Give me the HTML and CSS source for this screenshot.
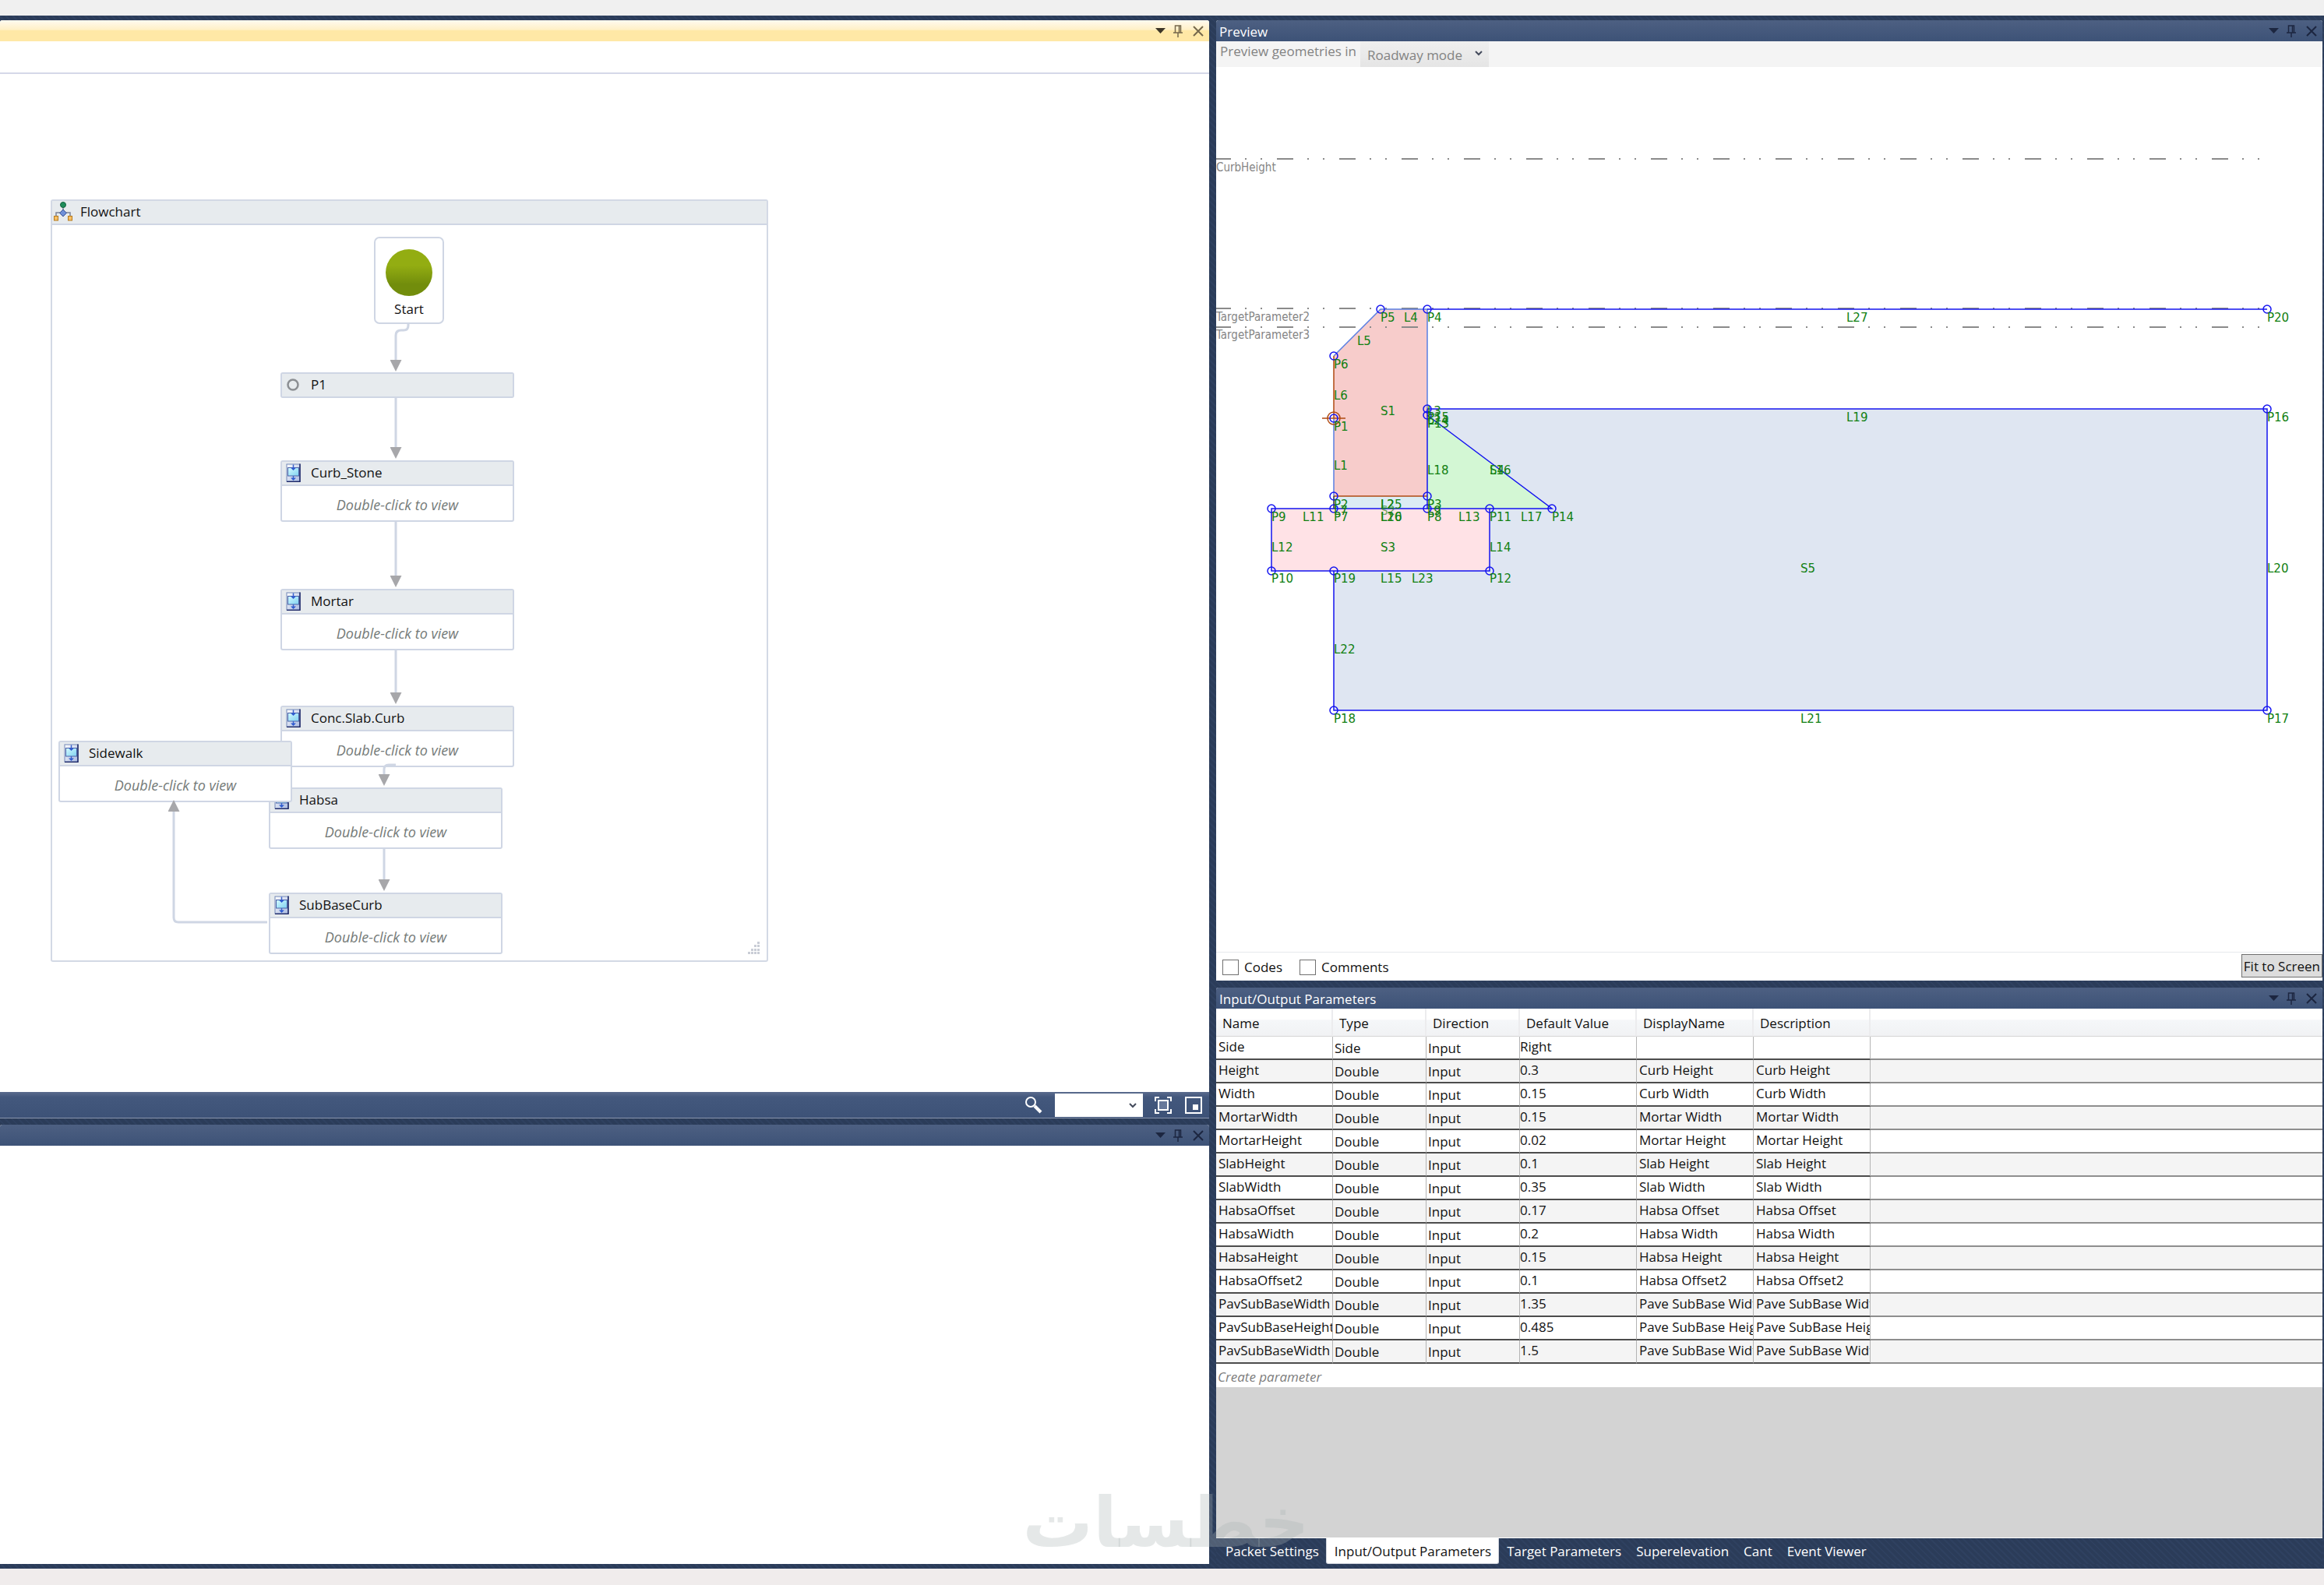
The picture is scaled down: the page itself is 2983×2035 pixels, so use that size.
FILE: index.html
```html
<!DOCTYPE html>
<html lang="en">
<head>
<meta charset="utf-8">
<title>Subassembly Composer</title>
<link rel="stylesheet" href="styles.css">
</head>
<body>
<svg class="defs" aria-hidden="true">
  <defs>
    <linearGradient id="seqBack" x1="0" y1="0" x2="1" y2="1"><stop offset="0" stop-color="#fff"/><stop offset="1" stop-color="#a9b9df"/></linearGradient>
    <linearGradient id="seqBox" x1="0" y1="0" x2="1" y2="1"><stop offset="0" stop-color="#d4fbff"/><stop offset="1" stop-color="#7fd0f0"/></linearGradient>
    <linearGradient id="startFill" x1="0" y1="0" x2="0" y2="1"><stop offset="0.35" stop-color="#93ad12"/><stop offset="0.75" stop-color="#728d0c"/></linearGradient>
    <symbol id="sequence" viewBox="0 0 19 24">
      <rect x="1" y="1" width="17" height="22" fill="url(#seqBack)" stroke="#7388b8" stroke-width="1"/>
      <path d="M18 0.5V23.5H1" fill="none" stroke="#1b2566" stroke-width="1.500"/>
      <rect x="2.500" y="5.500" width="14" height="10.500" fill="url(#seqBox)" stroke="#4a62a8"/>
      <path d="M9.500 1.500V6M9.500 16V20" stroke="#3b62cc" stroke-width="1.500"/>
      <path d="M6 5.500H13L9.500 9ZM6 18.500H13L9.500 22Z" fill="#2f5bd0"/>
    </symbol>
    <symbol id="caret" viewBox="0 0 13 7"><path d="M0 0H13L6.500 7Z" fill="currentColor"/></symbol>
    <symbol id="pin" viewBox="0 0 12 16"><path d="M2.500 10V1H9.500V10M7.500 1V10M0 10H12M6 10V16" fill="none" stroke="currentColor" stroke-width="1.500"/></symbol>
    <symbol id="close" viewBox="0 0 14 14"><path d="M1 1L13 13M13 1L1 13" fill="none" stroke="currentColor" stroke-width="2"/></symbol>
    <symbol id="chevron" viewBox="0 0 10 7"><path d="M1 1L5 5L9 1" fill="none" stroke="currentColor" stroke-width="2"/></symbol>
    <marker id="arrow" viewBox="0 0 15 15" refX="0" refY="7.500" markerWidth="15" markerHeight="15" markerUnits="userSpaceOnUse" orient="auto"><path d="M0 0L15 7.500L0 15Z" fill="#a7a7aa"/></marker>
  </defs>
</svg>
<div class="app">
  <main class="workspace">
    <div class="column column-left">
      <section class="panel panel-designer">
        <header class="titlebar titlebar-active">
          <div class="titlebar-tools">
            <button type="button" aria-label="Menu"><svg width="13" height="7"><use href="#caret"/></svg></button>
            <button type="button" aria-label="Pin"><svg width="12" height="16"><use href="#pin"/></svg></button>
            <button type="button" aria-label="Close"><svg width="14" height="14"><use href="#close"/></svg></button>
          </div>
        </header>
        <div class="breadcrumb"></div>
        <div class="canvas">
          <div class="flowchart">
            <div class="node-head">
              <svg class="flow-icon" width="24" height="26" viewBox="0 0 24 26">
                <path d="M12 6V11M3 18V14H21V18" fill="none" stroke="#7c8498" stroke-width="1.500"/>
                <circle cx="12" cy="4" r="3.500" fill="#1f8d5b" stroke="#14633f"/>
                <path d="M12 10L16.500 14.500L12 19L7.500 14.500Z" fill="#6f90d8" stroke="#3a5496"/>
                <rect x="0.500" y="18.500" width="5" height="5.500" fill="#f7bf65" stroke="#b57a1c"/>
                <rect x="18.500" y="18.500" width="5" height="5.500" fill="#f7bf65" stroke="#b57a1c"/>
              </svg>
              <span>Flowchart</span>
            </div>
            <div class="node start" style="left:413px;top:46px">
              <svg width="60" height="61"><circle cx="30" cy="30" r="30" fill="url(#startFill)"/></svg>
              <span>Start</span>
            </div>
            <div class="node" style="left:293px;top:220px">
              <div class="node-head"><svg width="19" height="24"><circle cx="9" cy="12" r="6.500" fill="none" stroke="#8c8f93" stroke-width="2.500"/></svg><span>P1</span></div>
            </div>
            <div class="node" style="left:293px;top:333px">
              <div class="node-head"><svg width="19" height="24"><use href="#sequence"/></svg><span>Curb_Stone</span></div>
              <div class="node-body">Double-click to view</div>
            </div>
            <div class="node" style="left:293px;top:498px">
              <div class="node-head"><svg width="19" height="24"><use href="#sequence"/></svg><span>Mortar</span></div>
              <div class="node-body">Double-click to view</div>
            </div>
            <div class="node" style="left:293px;top:648px">
              <div class="node-head"><svg width="19" height="24"><use href="#sequence"/></svg><span>Conc.Slab.Curb</span></div>
              <div class="node-body">Double-click to view</div>
            </div>
            <div class="node" style="left:278px;top:753px">
              <div class="node-head"><svg width="19" height="24"><use href="#sequence"/></svg><span>Habsa</span></div>
              <div class="node-body">Double-click to view</div>
            </div>
            <div class="node" style="left:278px;top:888px">
              <div class="node-head"><svg width="19" height="24"><use href="#sequence"/></svg><span>SubBaseCurb</span></div>
              <div class="node-body">Double-click to view</div>
            </div>
            <div class="node" style="left:8px;top:693px">
              <div class="node-head"><svg width="19" height="24"><use href="#sequence"/></svg><span>Sidewalk</span></div>
              <div class="node-body">Double-click to view</div>
            </div>
            <svg class="links" width="917" height="975" viewBox="67 258 917 975">
              <g fill="none" stroke="#cfd6e4" stroke-width="3" marker-end="url(#arrow)">
                <path d="M524 415V418Q524 424 518 424H515Q508 424 508 431V462"/>
                <path d="M508 511V574"/>
                <path d="M508 668V739"/>
                <path d="M508 833V889"/>
                <path d="M508 982H499Q493 982 493 988V994"/>
                <path d="M493 1088V1129"/>
                <path d="M343 1184H229Q223 1184 223 1178V1042"/>
              </g>
              <g fill="#c9cdd6">
                <path d="M972 1209h3v3h-3zM968 1213h3v3h-3zM972 1213h3v3h-3zM964 1218h3v3h-3zM968 1218h3v3h-3zM972 1218h3v3h-3zM960 1222h3v3h-3zM964 1222h3v3h-3zM968 1222h3v3h-3zM972 1222h3v3h-3z"/>
              </g>
            </svg>
          </div>
        </div>
        <footer class="zoombar">
          <svg width="24" height="24" viewBox="0 0 24 24"><circle cx="8" cy="8" r="6" fill="none" stroke="#fff" stroke-width="2"/><path d="M13 13L21 21" stroke="#fff" stroke-width="4"/></svg>
          <span class="picker picker-zoom">
            <select aria-label="Zoom"><option></option></select>
            <svg width="10" height="7"><use href="#chevron"/></svg>
          </span>
          <button type="button" aria-label="Fit to screen"><svg width="22" height="22" viewBox="0 0 22 22"><path d="M6 1H1V6M16 1H21V6M6 21H1V16M16 21H21V16" fill="none" stroke="#fff" stroke-width="2"/><rect x="5" y="5" width="12" height="12" fill="#66789a" stroke="#fff" stroke-width="2"/></svg></button>
          <button type="button" aria-label="Overview"><svg width="22" height="22" viewBox="0 0 22 22"><rect x="1" y="1" width="20" height="20" fill="none" stroke="#fff" stroke-width="2"/><rect x="10" y="10" width="7" height="7" fill="#fff"/></svg></button>
        </footer>
      </section>
      <section class="panel panel-properties">
        <header class="titlebar">
          <div class="titlebar-tools">
            <button type="button" aria-label="Menu"><svg width="13" height="7"><use href="#caret"/></svg></button>
            <button type="button" aria-label="Pin"><svg width="12" height="16"><use href="#pin"/></svg></button>
            <button type="button" aria-label="Close"><svg width="14" height="14"><use href="#close"/></svg></button>
          </div>
        </header>
      </section>
    </div>

    <div class="column column-right">
      <section class="panel panel-preview">
        <header class="titlebar">
          <h2>Preview</h2>
          <div class="titlebar-tools">
            <button type="button" aria-label="Menu"><svg width="13" height="7"><use href="#caret"/></svg></button>
            <button type="button" aria-label="Pin"><svg width="12" height="16"><use href="#pin"/></svg></button>
            <button type="button" aria-label="Close"><svg width="14" height="14"><use href="#close"/></svg></button>
          </div>
        </header>
        <div class="modebar">
          <label for="mode">Preview geometries in</label>
          <span class="picker picker-mode">
            <select id="mode" disabled><option>Roadway mode</option></select>
            <svg width="10" height="7"><use href="#chevron"/></svg>
          </span>
        </div>
        <div class="drawing">
          <svg viewBox="1561 86 1420 1130" preserveAspectRatio="xMinYMin meet">
            <g stroke="none">
              <path d="M1832 525H2910V912H1712V733H1912V653H1992L1832 533Z" fill="#dfe6f2"/>
              <path d="M1712 457L1772 397H1832V637H1712Z" fill="#f7cccb"/>
              <path d="M1712 637H1832V653H1712Z" fill="#dcecf4"/>
              <path d="M1832 533L1992 653H1832Z" fill="#d3f7d4"/>
              <path d="M1632 653H1912V733H1632Z" fill="#ffe2e6"/>
            </g>
            <g stroke="#8a8a8a" stroke-width="2" stroke-dasharray="21 18 2 18 2 19">
              <path d="M1559 204H2908M1559 396H2908M1559 420H2908"/>
            </g>
            <g class="targets">
              <text x="1561" y="220">CurbHeight</text>
              <text x="1561" y="412">TargetParameter2</text>
              <text x="1561" y="435">TargetParameter3</text>
            </g>
            <g fill="none" stroke="#5a7fe2" stroke-width="1.500">
              <path d="M1712 457L1772 397H1832V525M1712 537V637"/>
            </g>
            <g fill="none" stroke="#b04a12" stroke-width="1.500">
              <path d="M1712 457V537M1712 637H1832M1697 537H1727"/><circle cx="1712" cy="537" r="8"/>
            </g>
            <path d="M1712 637V653" stroke="#2b2b4a" stroke-width="1.500"/>
            <g fill="none" stroke="#1414f0" stroke-width="1.500">
              <path d="M1832 397H2910M1832 525H2910V912H1712V733M1832 525V653M1832 533L1992 653H1632V733H1912V653"/>
            </g>
            <g fill="none" stroke="#1414f0" stroke-width="1.500">
              <circle cx="1772" cy="397" r="5"/><circle cx="1832" cy="397" r="5"/><circle cx="2910" cy="397" r="5"/>
              <circle cx="1712" cy="457" r="5"/><circle cx="1712" cy="537" r="5"/><circle cx="1712" cy="637" r="5"/>
              <circle cx="1712" cy="653" r="5"/><circle cx="1832" cy="525" r="5"/><circle cx="1832" cy="533" r="5"/>
              <circle cx="1832" cy="637" r="5"/><circle cx="1832" cy="653" r="5"/><circle cx="1632" cy="653" r="5"/>
              <circle cx="1632" cy="733" r="5"/><circle cx="1712" cy="733" r="5"/><circle cx="1912" cy="733" r="5"/>
              <circle cx="1912" cy="653" r="5"/><circle cx="1992" cy="653" r="5"/><circle cx="2910" cy="525" r="5"/>
              <circle cx="2910" cy="912" r="5"/><circle cx="1712" cy="912" r="5"/>
            </g>
            <g class="labels">
              <text x="1772" y="413">P5</text><text x="1802" y="413">L4</text><text x="1832" y="413">P4</text>
              <text x="2370" y="413">L27</text><text x="2910" y="413">P20</text><text x="1742" y="443">L5</text>
              <text x="1712" y="473">P6</text><text x="1712" y="513">L6</text><text x="1772" y="533">S1</text>
              <text x="1712" y="553">P1</text><text x="1712" y="603">L1</text><text x="1832" y="533">L3</text>
              <text x="1832" y="541">P15</text><text x="1832" y="545">L24</text><text x="1832" y="549">P13</text>
              <text x="2370" y="541">L19</text><text x="2910" y="541">P16</text><text x="1832" y="609">L18</text>
              <text x="1912" y="609">S4</text><text x="1912" y="609">L16</text><text x="1712" y="653">P2</text>
              <text x="1772" y="653">L2</text><text x="1772" y="653">L25</text><text x="1832" y="653">P3</text>
              <text x="1712" y="661">L7</text><text class="soft" x="1772" y="661">S2</text><text x="1832" y="661">L9</text>
              <text x="1632" y="669">P9</text><text x="1672" y="669">L11</text><text x="1712" y="669">P7</text>
              <text x="1772" y="669">L10</text><text x="1772" y="669">L26</text><text x="1832" y="669">P8</text>
              <text x="1872" y="669">L13</text><text x="1912" y="669">P11</text><text x="1952" y="669">L17</text>
              <text x="1992" y="669">P14</text><text x="1632" y="708">L12</text><text x="1772" y="708">S3</text>
              <text x="1912" y="708">L14</text><text x="1632" y="748">P10</text><text x="1712" y="748">P19</text>
              <text x="1772" y="748">L15</text><text x="1812" y="748">L23</text><text x="1912" y="748">P12</text>
              <text x="2311" y="735">S5</text><text x="2910" y="735">L20</text><text x="1712" y="839">L22</text>
              <text x="1712" y="928">P18</text><text x="2311" y="928">L21</text><text x="2910" y="928">P17</text>
            </g>
          </svg>
        </div>
        <div class="options">
          <label><input type="checkbox"><span>Codes</span></label>
          <label><input type="checkbox"><span>Comments</span></label>
          <button type="button" class="fit">Fit to Screen</button>
        </div>
      </section>

      <section class="panel panel-parameters">
        <header class="titlebar">
          <h2>Input/Output Parameters</h2>
          <div class="titlebar-tools">
            <button type="button" aria-label="Menu"><svg width="13" height="7"><use href="#caret"/></svg></button>
            <button type="button" aria-label="Pin"><svg width="12" height="16"><use href="#pin"/></svg></button>
            <button type="button" aria-label="Close"><svg width="14" height="14"><use href="#close"/></svg></button>
          </div>
        </header>
        <table class="parameters">
          <colgroup><col class="w150"><col class="w120"><col class="w120"><col class="w150"><col class="w150"><col class="w150"><col></colgroup>
          <thead><tr><th>Name</th><th>Type</th><th>Direction</th><th>Default Value</th><th>DisplayName</th><th>Description</th><th></th></tr></thead>
          <tbody>
            <tr><td>Side</td><td>Side</td><td>Input</td><td>Right</td><td></td><td></td><td></td></tr>
            <tr><td>Height</td><td>Double</td><td>Input</td><td>0.3</td><td>Curb Height</td><td>Curb Height</td><td></td></tr>
            <tr><td>Width</td><td>Double</td><td>Input</td><td>0.15</td><td>Curb Width</td><td>Curb Width</td><td></td></tr>
            <tr><td>MortarWidth</td><td>Double</td><td>Input</td><td>0.15</td><td>Mortar Width</td><td>Mortar Width</td><td></td></tr>
            <tr><td>MortarHeight</td><td>Double</td><td>Input</td><td>0.02</td><td>Mortar Height</td><td>Mortar Height</td><td></td></tr>
            <tr><td>SlabHeight</td><td>Double</td><td>Input</td><td>0.1</td><td>Slab Height</td><td>Slab Height</td><td></td></tr>
            <tr><td>SlabWidth</td><td>Double</td><td>Input</td><td>0.35</td><td>Slab Width</td><td>Slab Width</td><td></td></tr>
            <tr><td>HabsaOffset</td><td>Double</td><td>Input</td><td>0.17</td><td>Habsa Offset</td><td>Habsa Offset</td><td></td></tr>
            <tr><td>HabsaWidth</td><td>Double</td><td>Input</td><td>0.2</td><td>Habsa Width</td><td>Habsa Width</td><td></td></tr>
            <tr><td>HabsaHeight</td><td>Double</td><td>Input</td><td>0.15</td><td>Habsa Height</td><td>Habsa Height</td><td></td></tr>
            <tr><td>HabsaOffset2</td><td>Double</td><td>Input</td><td>0.1</td><td>Habsa Offset2</td><td>Habsa Offset2</td><td></td></tr>
            <tr><td>PavSubBaseWidth</td><td>Double</td><td>Input</td><td>1.35</td><td>Pave SubBase Width</td><td>Pave SubBase Width</td><td></td></tr>
            <tr><td>PavSubBaseHeight</td><td>Double</td><td>Input</td><td>0.485</td><td>Pave SubBase Height</td><td>Pave SubBase Height</td><td></td></tr>
            <tr><td>PavSubBaseWidth</td><td>Double</td><td>Input</td><td>1.5</td><td>Pave SubBase Width</td><td>Pave SubBase Width</td><td></td></tr>
          </tbody>
        </table>
        <div class="create">Create parameter</div>
        <div class="filler"></div>
        <nav class="tabs">
          <a href="#packet">Packet Settings</a>
          <a href="#io" class="current">Input/Output Parameters</a>
          <a href="#targets">Target Parameters</a>
          <a href="#super">Superelevation</a>
          <a href="#cant">Cant</a>
          <a href="#events">Event Viewer</a>
        </nav>
      </section>
    </div>
    <div class="watermark" lang="ar" dir="rtl">خطسات</div>
  </main>
</div>
</body>
</html>
```
FILE: styles.css
```css
* { box-sizing: border-box; }

body {
  margin: 0;
  background: #f0f0f0;
  color: #111;
  font: 17px/26px "Open Sans", "Noto Sans", sans-serif;
}

.defs { position: absolute; width: 0; height: 0; }
svg { display: block; flex: none; }

button {
  padding: 0;
  border: 0;
  background: none;
  color: inherit;
  font: inherit;
}

.app {
  display: flex;
  flex-direction: column;
  min-height: 100vh;
  padding: 20px 0 21px;
  background: linear-gradient(#f0f0f0 50%, #f0ecec 50%);
}

.workspace {
  position: relative;
  flex: 1;
  display: grid;
  grid-template-columns: minmax(0, 1552fr) minmax(0, 1420fr);
  column-gap: 9px;
  padding: 6px 2px 6px 0;
  background: repeating-linear-gradient(45deg, #2b3c59 0 4px, #2f4160 4px 6px);
}

.column { display: flex; flex-direction: column; min-width: 0; }
.column-left { gap: 8px; }
.column-right { gap: 9px; }

.panel { display: flex; flex-direction: column; min-width: 0; background: #fff; border-radius: 3px 3px 0 0; }
.panel-designer { flex: 1410 0 0; }
.panel-properties { flex: 564 0 0; }
.panel-preview { flex: 1233 0 0; }
.panel-parameters { flex: 740 0 0; }

/* Title bars */
.titlebar {
  display: flex;
  align-items: center;
  height: 27px;
  padding: 0 7px 0 4px;
  border-radius: 3px 3px 0 0;
  background: linear-gradient(#4d6082, #3d5277);
  color: #fff;
}
.titlebar-active { background: linear-gradient(#fffaf0, #fff0c6 45%, #ffe8a6 50%, #ffe8a6); }
.titlebar h2 { margin: 0; padding-top: 2px; font: inherit; }
.titlebar-tools { display: flex; align-items: center; gap: 10px; margin-left: auto; color: #1c2640; }
.titlebar-tools button:last-child { margin-left: 3px; }
.titlebar-active .titlebar-tools { color: #75684c; }
.titlebar-active .titlebar-tools button:first-child { color: #3b3426; }

/* Flow designer */
.breadcrumb { height: 42px; border-bottom: 2px solid #d5d8e8; }
.canvas { position: relative; flex: 1; }
.flowchart {
  position: absolute;
  left: 65px;
  top: 161px;
  width: 921px;
  height: 979px;
  border: 2px solid #d3d9e5;
  border-radius: 3px;
  background: #fff;
}
.links { position: absolute; left: 0; top: 0; }
.node {
  position: absolute;
  width: 300px;
  border: 2px solid #cfd6e4;
  border-radius: 3px;
  background: #fff;
}
.node-head {
  display: flex;
  align-items: center;
  gap: 13px;
  height: 29px;
  padding: 0 5px 2px;
  background: #e7ebee;
}
.flowchart > .node-head {
  gap: 10px;
  height: 31px;
  padding: 0 2px 1px;
  border-bottom: 2px solid #cfd6e4;
}
.node-body {
  height: 46px;
  padding-top: 4px;
  border-top: 2px solid #cfd6e4;
  color: #747a78;
  font-size: 18px;
  font-style: italic;
  line-height: 40px;
  text-align: center;
}
.start {
  display: flex;
  flex-direction: column;
  align-items: center;
  gap: 3px;
  width: 90px;
  height: 112px;
  padding-top: 14px;
  border-radius: 7px;
}

.zoombar {
  display: flex;
  align-items: center;
  gap: 15px;
  height: 34px;
  padding-right: 9px;
  border-bottom: 1px solid #8995ad;
  background: linear-gradient(#5a6b8d, #43587d 20%, #3d5277);
  justify-content: flex-end;
}
.zoombar button + button { margin-left: 2px; }

.picker { position: relative; display: block; color: #444b5c; }
.picker select {
  appearance: none;
  display: block;
  width: 100%;
  height: 100%;
  margin: 0;
  border: 0;
  border-radius: 0;
  font: inherit;
  opacity: 1;
}
.picker svg { position: absolute; right: 8px; top: 12px; pointer-events: none; }
.picker-zoom { width: 113px; height: 30px; }
.picker-zoom select { background: #fff; }
.picker-mode { width: 165px; height: 33px; }
.picker-mode select {
  padding: 3px 9px 0;
  background: linear-gradient(#efefef, #e5e5e5);
  color: #838383;
}

/* Preview */
.modebar {
  display: flex;
  gap: 5px;
  height: 33px;
  padding-left: 5px;
  background: #f4f4f4;
  color: #838383;
}
.drawing { flex: 1 0 0; min-height: 0; border-bottom: 1px solid #e6e9ec; }
.drawing svg { width: 100%; height: 100%; }
.targets { fill: #858585; font: 15px "DejaVu Sans Condensed", "Noto Sans", sans-serif; }
.labels { fill: #118011; font: 15px "DejaVu Sans", sans-serif; }
.soft { opacity: 0.6; }

.options { display: flex; align-items: center; gap: 22px; height: 36px; padding-left: 8px; }
.options label { display: flex; align-items: center; gap: 7px; padding-top: 2px; }
.options input {
  appearance: none;
  width: 21px;
  height: 20px;
  margin: 0;
  border: 1px solid #707070;
  background: #fff;
}
.fit {
  align-self: flex-start;
  height: 30px;
  margin: 2px 0 0 auto;
  padding: 2px 2px 0;
  border: 1px solid #707070;
  background: #ddd;
}

/* Parameter grid */
.parameters { width: 100%; table-layout: fixed; border-collapse: separate; border-spacing: 0; }
.w150 { width: 150px; }
.w120 { width: 120px; }
.parameters th {
  height: 36px;
  padding: 3px 8px 0;
  border-right: 2px solid #ececee;
  border-bottom: 1px solid #d5d5d5;
  background: linear-gradient(#fff 40%, #f5f7f9 42%, #f1f2f4);
  font-weight: 400;
  line-height: 32px;
  text-align: left;
}
.parameters th:last-child, .parameters td:last-child { border-right: 0; }
.parameters td {
  height: 30px;
  padding: 0 3px;
  overflow: hidden;
  border-right: 1px solid #b4b4b4;
  border-bottom: 2px solid #4c4c4c;
  line-height: 26px;
  white-space: nowrap;
  vertical-align: top;
}
.parameters td:nth-child(2), .parameters td:nth-child(3) { padding: 2px 2px 0; }
.parameters td:nth-child(4) { padding-left: 0; }
.parameters td:last-child { border-bottom-color: #8e8e8e; }
.parameters tbody tr:nth-child(even) { background: #f4f4f4; }
.create { height: 30px; padding-left: 2px; color: #7d7d7d; font-style: italic; line-height: 34px; }
.filler { flex: 1; border-bottom: 1px solid #fff; background: #d3d3d3; }

.tabs {
  display: flex;
  height: 33px;
  padding-left: 2px;
  background: repeating-linear-gradient(45deg, #2b3c59 0 4px, #2f4160 4px 6px);
}
.tabs a { padding: 4px 9px 0 10px; color: #fff; text-decoration: none; }
.tabs .current { border: 1px solid #cfd3dc; border-top: 0; border-radius: 0 0 3px 3px; background: #fff; color: #111; }

.watermark {
  position: absolute;
  left: 44%;
  bottom: 14px;
  color: rgba(170, 180, 178, 0.3);
  font: bold 90px/90px "DejaVu Sans", sans-serif;
  pointer-events: none;
}
```
